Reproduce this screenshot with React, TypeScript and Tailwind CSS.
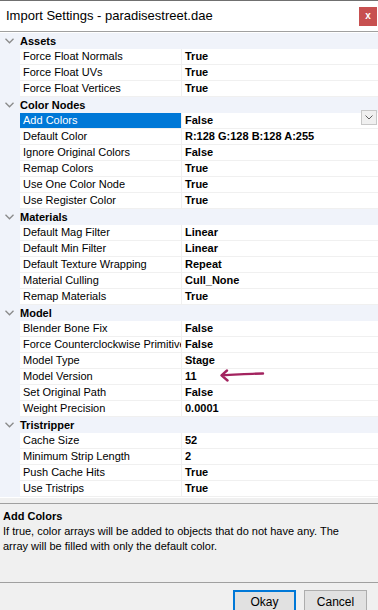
import React from "react";

type Prop = { label: string; value: string; selected?: boolean };
type Category = { name: string; props: Prop[] };

const categories: Category[] = [
  {
    name: "Assets",
    props: [
      { label: "Force Float Normals", value: "True" },
      { label: "Force Float UVs", value: "True" },
      { label: "Force Float Vertices", value: "True" },
    ],
  },
  {
    name: "Color Nodes",
    props: [
      { label: "Add Colors", value: "False", selected: true },
      { label: "Default Color", value: "R:128 G:128 B:128 A:255" },
      { label: "Ignore Original Colors", value: "False" },
      { label: "Remap Colors", value: "True" },
      { label: "Use One Color Node", value: "True" },
      { label: "Use Register Color", value: "True" },
    ],
  },
  {
    name: "Materials",
    props: [
      { label: "Default Mag Filter", value: "Linear" },
      { label: "Default Min Filter", value: "Linear" },
      { label: "Default Texture Wrapping", value: "Repeat" },
      { label: "Material Culling", value: "Cull_None" },
      { label: "Remap Materials", value: "True" },
    ],
  },
  {
    name: "Model",
    props: [
      { label: "Blender Bone Fix", value: "False" },
      { label: "Force Counterclockwise Primitives", value: "False" },
      { label: "Model Type", value: "Stage" },
      { label: "Model Version", value: "11" },
      { label: "Set Original Path", value: "False" },
      { label: "Weight Precision", value: "0.0001" },
    ],
  },
  {
    name: "Tristripper",
    props: [
      { label: "Cache Size", value: "52" },
      { label: "Minimum Strip Length", value: "2" },
      { label: "Push Cache Hits", value: "True" },
      { label: "Use Tristrips", value: "True" },
    ],
  },
];

function Chevron() {
  return (
    <svg width="9" height="6" viewBox="0 0 9 6" className="ml-[5px] mr-[6px]">
      <path d="M0.5 0.8 L4.5 4.8 L8.5 0.8" fill="none" stroke="#8a8a8a" strokeWidth="1.3" />
    </svg>
  );
}

// hand-drawn annotation arrow next to "Model Version"
function Arrow() {
  return (
    <svg width="46" height="14" viewBox="0 0 46 14" className="absolute left-[37px] top-[0px]">
      <path
        d="M44 4.5 C34 4.5 20 5.5 3 6.2 M8 1.5 L2.5 6.3 L8.5 11.5"
        fill="none"
        stroke="#a3235f"
        strokeWidth="2.4"
        strokeLinecap="round"
        strokeLinejoin="round"
      />
    </svg>
  );
}

function PropRow({ p }: { p: Prop }) {
  return (
    <div className="flex h-[16px]">
      <div className="w-[20px] bg-[#f0f3fa]" />
      <div
        className={`w-[161px] pl-[3px] border-b border-[#f0f0f0] overflow-hidden whitespace-nowrap leading-[15px] ${
          p.selected ? "bg-[#0078d7] text-white" : "text-black"
        }`}
      >
        {p.label}
      </div>
      <div className="w-px bg-[#f0f0f0]" />
      <div className="relative flex-1 pl-[3px] border-b border-[#f0f0f0] font-bold text-black leading-[15px]">
        {p.value}
        {p.selected && (
          <div className="absolute right-[1px] top-[-3px] w-[16px] h-[15px] bg-[#f0f0f0] border border-[#c8c8c8] flex items-center justify-center">
            <svg width="8" height="5" viewBox="0 0 8 5">
              <path d="M0.5 0.5 L4 4 L7.5 0.5" fill="none" stroke="#606060" strokeWidth="1" />
            </svg>
          </div>
        )}
        {p.label === "Model Version" && <Arrow />}
      </div>
    </div>
  );
}

export default function App() {
  return (
    <div
      className="w-[378px] h-[610px] overflow-hidden bg-[#f0f0f0] border-t border-[#707070] flex flex-col text-[11px]"
      style={{ fontFamily: '"Liberation Sans", Arial, sans-serif' }}
    >
      {/* Title bar */}
      <div className="h-[31px] bg-white border-b border-[#a0a0a0] flex items-center justify-between shrink-0">
        <span className="pl-[6px] text-[13px] text-black">Import Settings - paradisestreet.dae</span>
        <div className="w-[18px] h-[19px] mr-[1px] bg-[#c75050] flex items-center justify-center text-white font-bold text-[10px] leading-none">
          x
        </div>
      </div>

      {/* Property grid */}
      <div className="bg-white pt-[1px] pb-[1px] shrink-0">
        {categories.map((c) => (
          <div key={c.name}>
            <div className="flex items-center h-[16px] bg-[#f0f3fa]">
              <Chevron />
              <span className="font-bold text-black">{c.name}</span>
            </div>
            {c.props.map((p) => (
              <PropRow key={p.label} p={p} />
            ))}
          </div>
        ))}
      </div>

      {/* Description */}
      <div className="mt-[5px] h-[80px] border-y border-[#a0a0a0] pl-[3px] pr-[30px] pt-[5px] leading-[15px] text-black shrink-0">
        <div className="font-bold">Add Colors</div>
        <div>
          If true, color arrays will be added to objects that do not have any. The array will be filled with only the default color.
        </div>
      </div>

      {/* Buttons */}
      <div className="flex justify-end gap-[8px] pr-[11px] pt-[7px]">
        <button className="w-[63px] h-[23px] bg-[#e1e1e1] border-2 border-[#0078d7] text-black text-[12px]">
          Okay
        </button>
        <button className="w-[63px] h-[23px] bg-[#e1e1e1] border border-[#adadad] text-black text-[12px]">
          Cancel
        </button>
      </div>
    </div>
  );
}
